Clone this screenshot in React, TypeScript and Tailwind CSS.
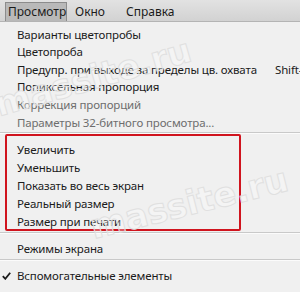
const top = [
  { label: "Варианты цветопробы" },
  { label: "Цветопроба" },
  { label: "Предупр. при выходе за пределы цв. охвата", hint: "Shift-" },
  { label: "Попиксельная пропорция" },
  { label: "Коррекция пропорций", off: true },
  { label: "Параметры 32-битного просмотра...", off: true },
];

const zoom = ["Увеличить", "Уменьшить", "Показать во весь экран", "Реальный размер", "Размер при печати"];

function Sep() {
  return <div className="mt-[1px] h-[2px] border-t border-[#c9c9c9] bg-white/70" />;
}

export default function App() {
  return (
    <div className="relative w-[300px] h-[292px] overflow-hidden bg-[#f0f0f0] text-[11.5px] tracking-[-0.15px] text-[#1b1b1b] font-['Noto_Sans',sans-serif]">
      {/* menu bar */}
      <div className="flex items-end h-[22px] bg-gradient-to-b from-[#e2e2e2] to-[#d2d2d2] border-b border-[#b4b4b4] pl-[5px] text-[12px] tracking-normal">
        <div className="h-[19px] w-[62px] flex items-center pl-[2px] bg-[#b9b9b9] border border-[#8c8c8c] border-b-0">Просмотр</div>
        <div className="ml-[8px] h-[19px] flex items-center">Окно</div>
        <div className="ml-[21px] h-[19px] flex items-center">Справка</div>
      </div>

      <div className="pt-[2px]">
        {top.map((it) => (
          <div key={it.label} className={`h-[17.6px] pt-[3px] flex items-center pl-[17px] whitespace-nowrap ${it.off ? "text-[#6e6e6e]" : ""}`}>
            <span className="w-[258px] shrink-0">{it.label}</span>
            {it.hint && <span>{it.hint}</span>}
          </div>
        ))}
        <div className="mt-[2px]">
          <Sep />
        </div>
        <div className="ml-[5px] w-[236px] border-2 border-[#d0141e] rounded-[2px] pt-[4px]">
          {zoom.map((z) => (
            <div key={z} className="h-[17.8px] pt-[3px] flex items-center pl-[10px]">{z}</div>
          ))}
        </div>
        <Sep />
        <div className="h-[24px] pt-[6px] flex items-center pl-[17px]">Режимы экрана</div>
        <Sep />
        <div className="h-[25px] pt-[6px] flex items-center pl-[17px] relative">
          <svg className="absolute left-[2px] top-[11px]" width="9" height="8" viewBox="0 0 9 8">
            <path d="M0.8 4.2 L3.3 6.8 L8.2 0.8" fill="none" stroke="#1b1b1b" strokeWidth="1.8" />
          </svg>
          Вспомогательные элементы
        </div>
        <div className="h-[18px] pt-[3px] flex items-center pl-[17px]">Показать</div>
      </div>

      {/* watermark */}
      <div aria-hidden className="absolute left-[-8px] top-[52px] -rotate-[16deg] text-[34px] font-bold text-white/30 [-webkit-text-stroke:1px_#e0e0e0] font-['DejaVu_Sans',sans-serif] pointer-events-none select-none">massite.ru</div>
      <div aria-hidden className="absolute left-[88px] top-[178px] -rotate-[14deg] text-[34px] font-bold text-white/30 [-webkit-text-stroke:1px_#e0e0e0] font-['DejaVu_Sans',sans-serif] pointer-events-none select-none">massite.ru</div>
    </div>
  );
}
